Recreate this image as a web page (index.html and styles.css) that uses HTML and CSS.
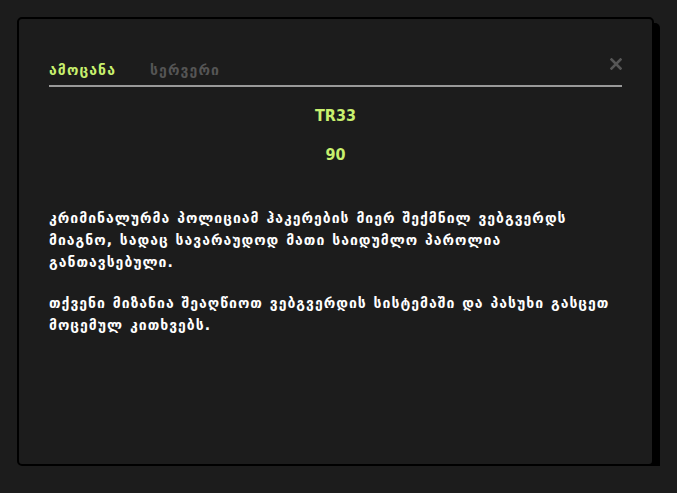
FILE: index.html
```html
<!DOCTYPE html>
<html lang="ka">
<head>
<meta charset="utf-8">
<title>ამოცანა</title>
<link rel="stylesheet" href="styles.css">
</head>
<body>
<div class="modal">
  <div class="tabs">
    <span class="tab active">ამოცანა</span>
    <span class="tab">სერვერი</span>
  </div>
  <button class="close" aria-label="close">
    <svg width="12" height="12" viewBox="0 0 12 12"><path d="M1.5 1.5 L10.5 10.5 M10.5 1.5 L1.5 10.5" stroke="#565656" stroke-width="2.6" stroke-linecap="square"/></svg>
  </button>
  <div class="title">TR33</div>
  <div class="points">90</div>
  <div class="body">
    <p>კრიმინალურმა პოლიციამ ჰაკერების მიერ შექმნილ ვებგვერდს მიაგნო, სადაც სავარაუდოდ მათი საიდუმლო პაროლია განთავსებული.</p>
    <p>თქვენი მიზანია შეაღწიოთ ვებგვერდის სისტემაში და პასუხი გასცეთ მოცემულ კითხვებს.</p>
  </div>
</div>
</body>
</html>
```

FILE: styles.css
```css
html, body {
  margin: 0;
  padding: 0;
  background: #1c1c1c;
}
body {
  padding: 17px 0 0 17px;
  font-family: "DejaVu Sans", sans-serif;
}
.modal {
  position: relative;
  box-sizing: border-box;
  width: 637px;
  height: 449px;
  border: 2px solid #000;
  border-radius: 5px;
  box-shadow: 6px 6px 0 #000;
  background: #1c1c1c;
  padding: 41px 30px 0 30px;
}
.tabs {
  display: flex;
  gap: 34px;
  border-bottom: 2px solid #999;
  padding-bottom: 5px;
}
.tab {
  font-size: 14px;
  font-weight: bold;
  color: #555;
  line-height: 20px;
  letter-spacing: 1.1px;
}
.tab.active {
  color: #c8f06e;
}
.close {
  position: absolute;
  top: 39px;
  right: 30px;
  background: none;
  border: 0;
  padding: 0;
  width: 12px;
  height: 12px;
  line-height: 0;
}
.title, .points {
  text-align: center;
  color: #c8f06e;
  font-family: "DejaVu Sans Condensed", "DejaVu Sans", sans-serif;
  font-weight: bold;
  font-size: 16px;
  line-height: 20px;
}
.title {
  margin-top: 19px;
}
.points {
  margin-top: 19px;
}
.body {
  margin-top: 42px;
  color: #fff;
  font-size: 14px;
  font-weight: bold;
  line-height: 22px;
  letter-spacing: 1px;
  word-spacing: 1px;
}
.body p {
  margin: 0 0 19px 0;
}
```
